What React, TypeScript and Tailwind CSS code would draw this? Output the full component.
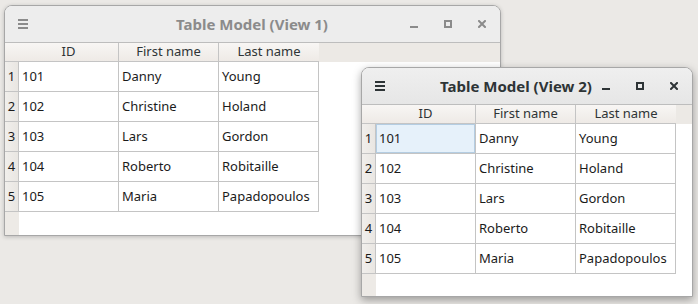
import React from 'react';

interface Person {
  id: string;
  first: string;
  last: string;
}

const people: Person[] = [
  { id: '101', first: 'Danny', last: 'Young' },
  { id: '102', first: 'Christine', last: 'Holand' },
  { id: '103', first: 'Lars', last: 'Gordon' },
  { id: '104', first: 'Roberto', last: 'Robitaille' },
  { id: '105', first: 'Maria', last: 'Papadopoulos' },
];

function Hamburger({ color }: { color: string }) {
  return (
    <svg width="10" height="10" viewBox="0 0 10 10" className="shrink-0">
      <rect x="0" y="0" width="10" height="2" fill={color} />
      <rect x="0" y="4" width="10" height="2" fill={color} />
      <rect x="0" y="8" width="10" height="2" fill={color} />
    </svg>
  );
}

function WindowButtons({ color }: { color: string }) {
  return (
    <div className="ml-auto flex items-center gap-[26px] pr-[14px]">
      <svg width="8" height="8" viewBox="0 0 8 8">
        <rect x="0" y="6" width="8" height="2" fill={color} />
      </svg>
      <svg width="8" height="8" viewBox="0 0 8 8">
        <rect x="1" y="1" width="6" height="6" fill="none" stroke={color} strokeWidth="2" />
      </svg>
      <svg width="8" height="8" viewBox="0 0 8 8">
        <path d="M1 1 L7 7 M7 1 L1 7" stroke={color} strokeWidth="2" strokeLinecap="square" />
      </svg>
    </div>
  );
}

interface TableWindowProps {
  title: string;
  active: boolean;
  frame: string;
  titleOffset: string;
  selectFirst?: boolean;
}

function TableWindow({ title, active, frame, titleOffset, selectFirst }: TableWindowProps) {
  const ink = active ? '#2e3436' : '#8b8b8b';
  return (
    <div
      className={`absolute flex flex-col overflow-hidden rounded-t-[8px] border border-[#a7a7a7] bg-white ${frame} ${
        active ? 'shadow-[0_3px_8px_rgba(0,0,0,0.35)]' : 'shadow-[0_1px_4px_rgba(0,0,0,0.2)]'
      }`}
    >
      {/* title bar */}
      <div
        className={`flex h-[37px] shrink-0 items-center border-b border-[#bdbdbd] pl-[13px] ${
          active ? 'bg-gradient-to-b from-[#efefef] to-[#e6e6e6]' : 'bg-[#ededed]'
        }`}
      >
        <Hamburger color={ink} />
        <span
          className={`text-[15px] font-bold leading-none whitespace-nowrap ${titleOffset}`}
          style={{ color: ink }}
        >
          {title}
        </span>
        <WindowButtons color={ink} />
      </div>

      {/* table */}
      <div className="flex flex-1 font-['Noto_Sans',sans-serif] text-[13px] text-[#1b1b1b]">
        <div className="flex w-[14px] shrink-0 flex-col bg-[#edeae6]">
          <div className="h-[19px] border-b border-[#c4c4c4] bg-gradient-to-b from-[#f8f6f4] to-[#eeeae6]" />
          {people.map((p, i) => (
            <div
              key={p.id}
              className="flex h-[30px] items-center justify-center border-r border-b border-[#c4c4c4] bg-gradient-to-r from-[#f1efec] to-[#e9e6e2]"
            >
              {i + 1}
            </div>
          ))}
        </div>
        <div className="flex flex-1 flex-col">
          <div className="flex h-[19px] bg-[#ece9e5]">
            {['ID', 'First name', 'Last name'].map((h, i) => (
              <div
                key={h}
                className={`flex w-[100px] items-center justify-center border-b border-[#c4c4c4] bg-gradient-to-b from-[#f8f6f4] to-[#eeeae6] text-[#2e3436] ${
                  i < 2 ? 'border-r' : ''
                }`}
              >
                {h}
              </div>
            ))}
          </div>
          {people.map((p, r) => (
            <div key={p.id} className="flex h-[30px]">
              {[p.id, p.first, p.last].map((v, c) => (
                <div
                  key={c}
                  className={`flex w-[100px] items-center border-r border-b border-[#c4c4c4] pl-[3px] ${
                    selectFirst && r === 0 && c === 0
                      ? 'bg-[#e6f1fa] shadow-[inset_0_0_0_1px_#b4cde2]'
                      : ''
                  }`}
                >
                  {v}
                </div>
              ))}
            </div>
          ))}
        </div>
      </div>
    </div>
  );
}

export default function App() {
  return (
    <div className="relative h-[304px] w-[698px] overflow-hidden bg-[#ebe9e6] font-['Noto_Sans',sans-serif]">
      <TableWindow
        title="Table Model (View 1)"
        active={false}
        frame="left-[4px] top-[5px] w-[497px] h-[231px]"
        titleOffset="ml-[148px]"
      />
      <TableWindow
        title="Table Model (View 2)"
        active
        frame="left-[361px] top-[67px] w-[332px] h-[230px]"
        titleOffset="ml-[55px]"
        selectFirst
      />
    </div>
  );
}
